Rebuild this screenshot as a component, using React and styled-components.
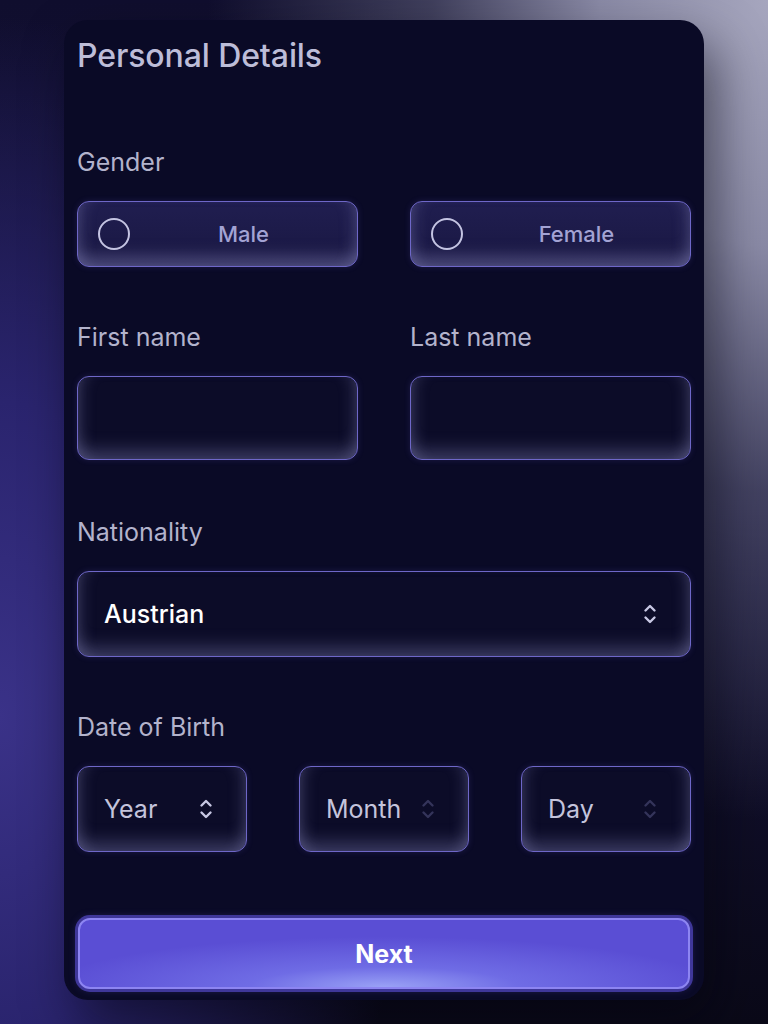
import React, { useState } from 'react';
import styled, { createGlobalStyle, css } from 'styled-components';

const GlobalStyle = createGlobalStyle`
  * { box-sizing: border-box; }
  html, body {
    margin: 0;
    padding: 0;
    width: 768px;
    height: 1024px;
    overflow: hidden;
    font-family: Inter, "Noto Sans", sans-serif;
    background:
      radial-gradient(ellipse 560px 820px at 100% 0%, #a6a6be 0%, #8a8aa6 30%, rgba(90,90,118,0.65) 60%, rgba(20,20,40,0) 100%),
      radial-gradient(ellipse 420px 700px at 0% 70%, #3a3288 0%, #2a246e 45%, rgba(20,18,50,0) 100%),
      linear-gradient(180deg, #100e2e 0%, #16143a 50%, #0a0918 100%);
  }
`;

const Page = styled.div`
  padding: 20px 64px 0;
`;

const Card = styled.div`
  width: 640px;
  height: 980px;
  background: #0a0a26;
  border-radius: 24px;
  padding: 17px 13px 11px;
  display: flex;
  flex-direction: column;
  box-shadow: 12px 24px 50px rgba(4, 4, 14, 0.5);
`;

const Title = styled.h1`
  margin: 0 0 72px;
  font-size: 32px;
  line-height: 38px;
  font-weight: 500;
  color: #bdbdd8;
  letter-spacing: -0.1px;
`;

const Field = styled.div`
  display: flex;
  flex-direction: column;
  gap: 24px;
  margin-bottom: ${p => (p.last ? 0 : 55)}px;
`;

const Label = styled.label`
  font-size: 25px;
  line-height: 30px;
  color: #b3b3cc;
`;

const Row = styled.div`
  display: grid;
  grid-template-columns: ${p => p.cols};
  column-gap: 52px;
  margin-bottom: ${p => p.gapAfter || 0}px;
`;

const glass = css`
  border: 1.5px solid #6e67c8;
  border-radius: 12px;
  box-shadow:
    inset 0 -18px 18px -10px rgba(150, 150, 205, 0.36),
    inset 14px 0 16px -12px rgba(150, 150, 205, 0.3),
    inset -14px 0 16px -12px rgba(150, 150, 205, 0.3),
    0 0 6px rgba(110, 100, 220, 0.18);
`;

const GenderOption = styled.button`
  ${glass};
  height: 66px;
  background: linear-gradient(180deg, #201e50 0%, #1b1946 70%, #25234f 100%);
  display: flex;
  align-items: center;
  padding: 0 0 0 20px;
  cursor: pointer;
  font-family: inherit;
`;

const Radio = styled.span`
  width: 32px;
  height: 32px;
  border-radius: 50%;
  border: 2px solid #c4c4e2;
  flex-shrink: 0;
  background: ${p => (p.checked ? 'radial-gradient(circle, #c4c4e2 38%, transparent 42%)' : 'transparent')};
`;

const OptionText = styled.span`
  flex: 1;
  text-align: center;
  font-size: 22px;
  font-weight: 500;
  color: #a3a3d4;
`;

const TextInput = styled.input`
  ${glass};
  height: 84px;
  width: 100%;
  background: #0c0c28;
  padding: 0 26px;
  font-family: inherit;
  font-size: 24px;
  color: #fff;
  outline: none;
`;

const Select = styled.div`
  ${glass};
  height: 86px;
  background: #0c0c28;
  display: flex;
  align-items: center;
  justify-content: space-between;
  padding: 0 33px 0 26px;
  font-size: 25px;
  font-weight: ${p => (p.strong ? 500 : 400)};
  color: ${p => (p.strong ? '#ffffff' : '#c4c4dc')};
  cursor: pointer;
`;

const Chevrons = styled.svg`
  width: 14px;
  height: 22px;
  flex-shrink: 0;
  color: ${p => (p.dim ? '#34345a' : '#c8c8e4')};
`;

const NextButton = styled.button`
  margin-top: 66px;
  height: 72px;
  width: 612px;
  margin-left: 1px;
  border-radius: 12px;
  border: 2px solid #8d85f2;
  background:
    radial-gradient(ellipse 55% 75% at 50% 100%, #9aa2f6 0%, rgba(125, 128, 240, 0.6) 40%, rgba(91, 79, 212, 0) 100%),
    #5a4ed4;
  box-shadow: 0 0 0 3px #3f379a, 0 0 10px rgba(90, 80, 210, 0.4);
  color: #fff;
  font-family: inherit;
  font-size: 25px;
  font-weight: 700;
  cursor: pointer;
`;

const UpDown = ({ dim }) => (
  <Chevrons dim={dim} viewBox="0 0 14 22" fill="none" stroke="currentColor" strokeWidth="2.4" strokeLinecap="round" strokeLinejoin="round">
    <path d="M2.5 7.5L7 3l4.5 4.5" />
    <path d="M2.5 14.5L7 19l4.5-4.5" />
  </Chevrons>
);

const App = () => {
  const [gender, setGender] = useState(null);

  return (
    <Page>
      <GlobalStyle />
      <Card>
        <Title>Personal Details</Title>

        <Field>
          <Label>Gender</Label>
          <Row cols="1fr 1fr">
            {['Male', 'Female'].map(g => (
              <GenderOption key={g} onClick={() => setGender(g)}>
                <Radio checked={gender === g} />
                <OptionText>{g}</OptionText>
              </GenderOption>
            ))}
          </Row>
        </Field>

        <Row cols="1fr 1fr" gapAfter={57}>
          <Field last>
            <Label>First name</Label>
            <TextInput />
          </Field>
          <Field last>
            <Label>Last name</Label>
            <TextInput />
          </Field>
        </Row>

        <Field>
          <Label>Nationality</Label>
          <Select strong>
            Austrian
            <UpDown />
          </Select>
        </Field>

        <Field last>
          <Label>Date of Birth</Label>
          <Row cols="1fr 1fr 1fr">
            <Select>Year<UpDown /></Select>
            <Select>Month<UpDown dim /></Select>
            <Select>Day<UpDown dim /></Select>
          </Row>
        </Field>

        <NextButton>Next</NextButton>
      </Card>
    </Page>
  );
};

export default App;
